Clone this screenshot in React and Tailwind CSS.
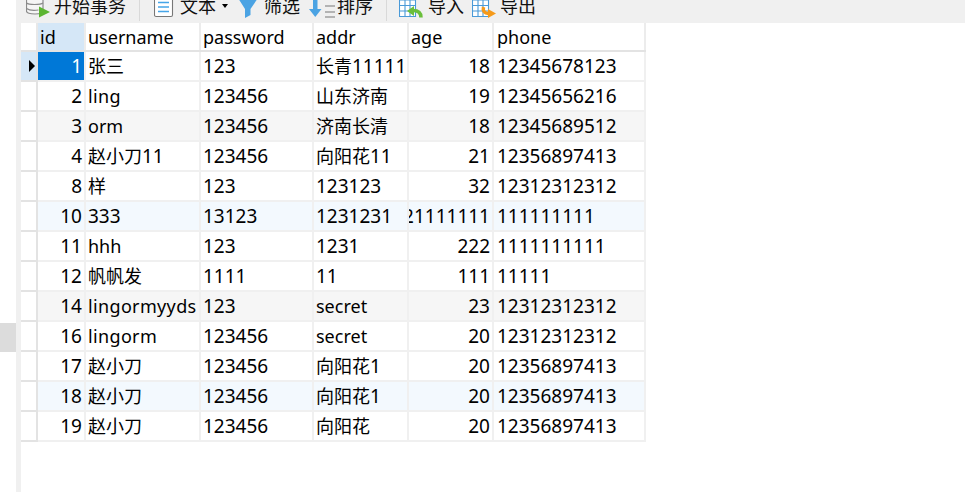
const cols = [
  { w: 'w-[48px] px-[2px]', right: true },
  { w: 'w-[115px] px-[2px]' },
  { w: 'w-[113px] px-[2px]' },
  { w: 'w-[95px] px-[2px]' },
  { w: 'w-[85px] px-[2px]', right: true },
  { w: 'w-[152px] pl-[3px] pr-[2px]' },
];
const headers = ['id', 'username', 'password', 'addr', 'age', 'phone'];
const rows = [
  ['1', '张三', '123', '长青11111', '18', '12345678123'],
  ['2', 'ling', '123456', '山东济南', '19', '12345656216'],
  ['3', 'orm', '123456', '济南长清', '18', '12345689512', 'bg-[#f6f6f6]'],
  ['4', '赵小刀11', '123456', '向阳花11', '21', '12356897413'],
  ['8', '样', '123', '123123', '32', '12312312312'],
  ['10', '333', '13123', '1231231', '21111111', '111111111', 'bg-[#f3f9fe]'],
  ['11', 'hhh', '123', '1231', '222', '1111111111'],
  ['12', '帆帆发', '1111', '11', '111', '11111'],
  ['14', 'lingormyyds', '123', 'secret', '23', '12312312312', 'bg-[#f6f6f6]'],
  ['16', 'lingorm', '123456', 'secret', '20', '12312312312'],
  ['17', '赵小刀', '123456', '向阳花1', '20', '12356897413'],
  ['18', '赵小刀', '123456', '向阳花1', '20', '12356897413', 'bg-[#f3f9fe]'],
  ['19', '赵小刀', '123456', '向阳花', '20', '12356897413'],
];

function Cell({ value }) {
  return value.split(/(\d+)/).map((part, i) =>
    /^\d+$/.test(part) ? (
      <span key={i} className="text-[19px]">
        {part}
      </span>
    ) : (
      <span key={i} className={part.startsWith('ling') ? 'tracking-[0.35px]' : ''}>
        {part}
      </span>
    ),
  );
}

function TxIcon() {
  return (
    <svg width="24" height="24" viewBox="0 -6 24 24" className="shrink-0">
      <path d="M0.500 -4h16.500v15c0 2-3 3-8 3s-8.500-1-8.500-3z" fill="#f5f5f5" stroke="#8a8a8a" strokeWidth="1.200" />
      <path d="M0.500 3c2 2 14 2 16.500 0M0.500 8.500c2 1.500 8 2 12 1.500" fill="none" stroke="#8a8a8a" strokeWidth="1.200" />
      <path d="M13 6.500l11 5.500-11 5.500z" fill="#5cb531" />
    </svg>
  );
}
function DocIcon() {
  return (
    <svg width="20" height="24" viewBox="0 -6 20 24" className="shrink-0">
      <path d="M0.500 -6h13l5 5v16a1.500 1.500 0 0 1-1.500 1.500h-15a1.500 1.500 0 0 1-1.500-1.500z" fill="#fff" stroke="#777" strokeWidth="1.100" />
      <path d="M4 2.500h11M4 7h11M4 11.500h11" stroke="#45a5e8" strokeWidth="1.300" />
    </svg>
  );
}
function FilterIcon() {
  return (
    <svg width="20" height="24" viewBox="0 -6 20 24" className="shrink-0">
      <path d="M0 -2h20l-7.500 11v6l-5.500 3v-9z" fill="#4ba3e3" />
    </svg>
  );
}
function SortIcon() {
  return (
    <svg width="28" height="24" viewBox="0 -6 28 24" className="shrink-0">
      <path d="M4 -6h4.500v15h4l-6.250 8-6.250-8h4z" fill="#4ba3e3" />
      <path d="M16 6h10M16 12h10M16 17h10" stroke="#777" strokeWidth="1.100" />
    </svg>
  );
}
function GridLines() {
  return (
    <path d="M0.500 -6h16v22.500h-16zM0.500 0h16M0.500 5.500h16M0.500 11h16M6 -6v22.500M11 -6v22.500" fill="#fff" stroke="#4a9ad8" strokeWidth="1.100" />
  );
}
function ImportIcon() {
  return (
    <svg width="24" height="24" viewBox="0 -6 24 24" className="shrink-0">
      <GridLines />
      <path d="M22 17.500c0-5-2.500-7-8-7" fill="none" stroke="#6abf3b" strokeWidth="3.500" />
      <path d="M15 6l-7 5 7 5z" fill="#6abf3b" />
    </svg>
  );
}
function ExportIcon() {
  return (
    <svg width="24" height="24" viewBox="0 -6 24 24" className="shrink-0">
      <GridLines />
      <path d="M11.500 7c-1 4 1 6.500 5 6.500" fill="none" stroke="#f59a1b" strokeWidth="3.500" />
      <path d="M16 9l8 4.500-8 4.500z" fill="#f59a1b" />
    </svg>
  );
}

function ToolItem({ icon, label, className = '', extra }) {
  return (
    <div className={`flex items-center h-[24px] mt-[-6px] shrink-0 ${className}`}>
      {icon}
      <span className="whitespace-nowrap">{label}</span>
      {extra}
    </div>
  );
}

function Sep() {
  return <div className="w-px h-[21px] bg-[#d9d9d9] shrink-0" />;
}

export default function App() {
  return (
    <div className="w-[965px] h-[492px] overflow-hidden bg-white flex text-[18px] text-black font-['Noto_Sans','Noto_Sans_CJK_SC',sans-serif]">
      <div className="w-4 shrink-0 flex flex-col pt-[323px]">
        <div className="h-[29px] bg-[#dcdcdc]" />
      </div>
      <div className="flex-1 flex flex-col min-w-0">
        <div className="h-[23px] bg-[#f0f0f0] overflow-hidden flex items-start text-[18px] leading-[24px] text-[#111]">
          <ToolItem icon={<TxIcon />} label="开始事务" className="ml-[10px] w-[113px] gap-[4px]" />
          <Sep />
          <ToolItem
            icon={<DocIcon />}
            label="文本"
            className="ml-[14px] gap-[6px] w-[84px]"
            extra={<span className="border-x-[3px] border-t-[4px] border-x-transparent border-t-black" />}
          />
          <ToolItem icon={<FilterIcon />} label="筛选" className="w-[71px] gap-[6px]" />
          <ToolItem icon={<SortIcon />} label="排序" className="w-[77px]" />
          <Sep />
          <ToolItem icon={<ImportIcon />} label="导入" className="ml-[12px] w-[73px] gap-[5px]" />
          <ToolItem icon={<ExportIcon />} label="导出" className="gap-[4px]" />
        </div>
        <div className="flex-1 flex">
          <div className="w-[5px] bg-[#f0f0f0] shrink-0" />
          <div className="flex flex-col">
            <div className="flex h-[29px] border-b-2 border-[#e3e3e3]">
              <div className="w-[17px] shrink-0 border-r-2 border-[#e8e8e8]" />
              {headers.map((h, i) => (
                <div
                  key={h}
                  className={`${cols[i].w} shrink-0 leading-[28px] border-r-2 border-[#ececec] ${i === 0 ? 'bg-[#d5e7f7]' : ''}`}
                >
                  {h}
                </div>
              ))}
            </div>
            {rows.map((r, ri) => (
              <div key={r[0]} className="flex h-[30px]">
                <div
                  className={`w-[17px] shrink-0 border-r-2 border-b-2 border-[#e3e3e3] flex items-center justify-center ${ri === 0 ? 'bg-[#d5e7f7]' : ''}`}
                >
                  {ri === 0 && <span className="ml-[6px] border-y-[6px] border-l-[6px] border-y-transparent border-l-black" />}
                </div>
                {cols.map((c, ci) => (
                  <div
                    key={ci}
                    className={`${c.w} shrink-0 flex items-center overflow-hidden whitespace-nowrap border-r-2 border-b-2 border-[#f0f0f0] ${c.right ? 'justify-end' : ''} ${ri === 0 && ci === 0 ? 'bg-[#0078d7] text-white' : r[6] || ''}`}
                  >
                    <span className="shrink-0">
                      <Cell value={r[ci]} />
                    </span>
                  </div>
                ))}
              </div>
            ))}
          </div>
        </div>
      </div>
    </div>
  );
}
